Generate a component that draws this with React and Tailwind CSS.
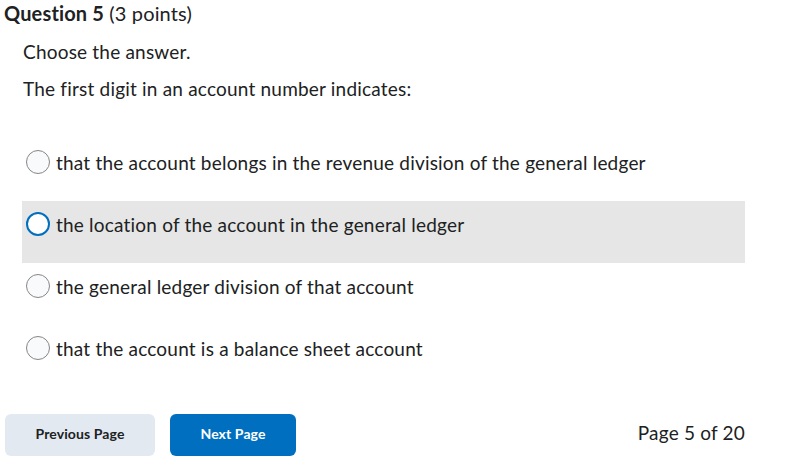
import { useState } from 'react';

const OPTIONS = [
  'that the account belongs in the revenue division of the general ledger',
  'the location of the account in the general ledger',
  'the general ledger division of that account',
  'that the account is a balance sheet account',
];

function Radio({ active }) {
  return (
    <span
      className={`block h-6 w-6 shrink-0 rounded-full ${
        active ? 'border-2 border-[#006fbf] bg-white' : 'border border-[#868686] bg-[#f9fafb]'
      }`}
    />
  );
}

export default function App() {
  const [hovered] = useState(1);

  return (
    <div className="w-[800px] h-[476px] bg-white text-[#202122] font-['Lato','Liberation_Sans',sans-serif] [font-variant-ligatures:none] overflow-hidden">
      <h2 className="pl-[4px] pt-[1px] text-[20px] leading-[24px] tracking-[0.15px]">
        <span className="font-bold">Question 5</span> <span>(3 points)</span>
      </h2>

      <div className="pl-[23px] pt-[14px] text-[19px] leading-[26px] tracking-[0.2px]">
        <p>Choose the answer.</p>
        <p className="mt-[11px]">The first digit in an account number indicates:</p>
      </div>

      <div className="ml-[22px] mt-[37px] w-[723px]">
        {OPTIONS.map((text, i) => (
          <label
            key={i}
            className={`flex h-[62px] items-start gap-[6px] pl-[4px] pt-[11px] text-[19px] leading-[26px] tracking-[0.2px] ${
              hovered === i ? 'bg-[#e6e6e6]' : ''
            }`}
          >
            <span className="pt-[0px]">
              <Radio active={hovered === i} />
            </span>
            <span>{text}</span>
          </label>
        ))}
      </div>

      <div className="mt-[27px] flex items-center pl-[5px] pr-[55px]">
        <button className="h-[42px] w-[150px] rounded-[6px] bg-[#e3e9f1] pb-[3px] text-[14px] font-bold tracking-[0.1px] text-[#202122]">
          Previous Page
        </button>
        <button className="ml-[15px] h-[42px] w-[126px] rounded-[6px] bg-[#006fbf] pb-[3px] text-[14px] font-bold tracking-[0.1px] text-white">
          Next Page
        </button>
        <span className="ml-auto pb-[3px] text-[19px] tracking-[0.2px]">Page 5 of 20</span>
      </div>
    </div>
  );
}
